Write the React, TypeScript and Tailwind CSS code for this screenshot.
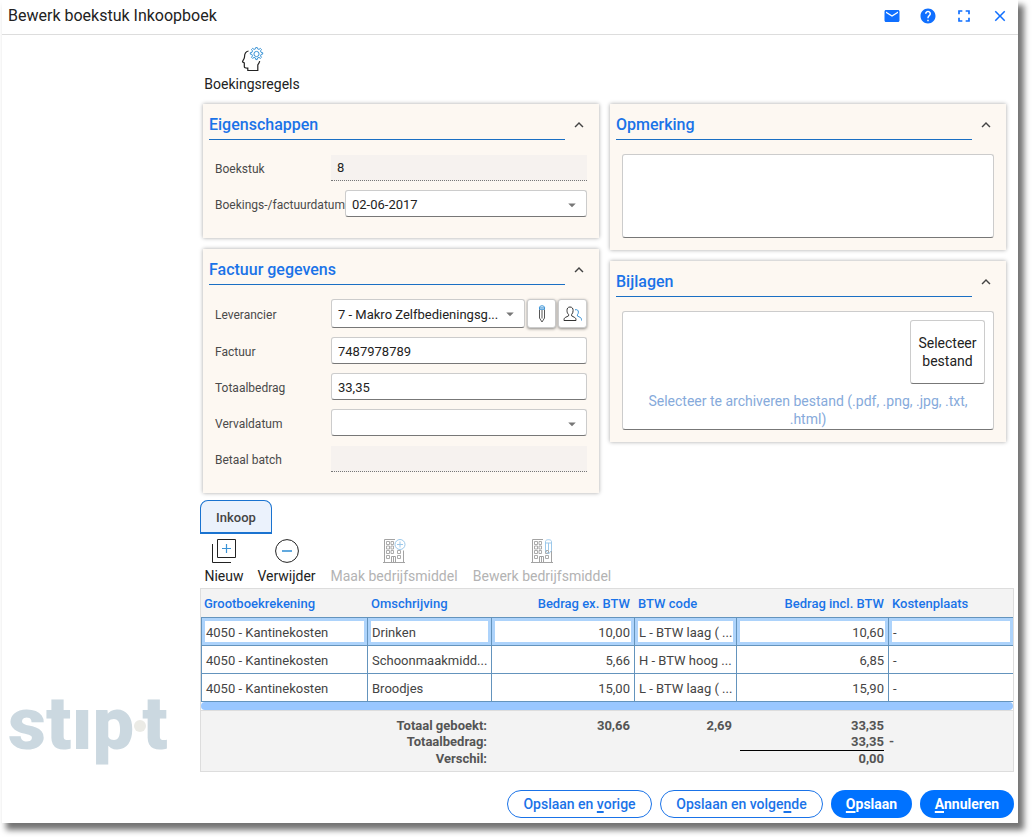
import type { ReactNode } from 'react';
import { MdArrowDropDown, MdClose, MdEmail, MdExpandLess, MdFullscreen, MdHelp } from 'react-icons/md';

const fieldClass =
  'h-[27px] w-full min-w-0 rounded-[3px] border border-[#cccccc] border-b-[#777777] bg-white px-1.5 pt-0.5 text-[13px] text-[#222222] outline-none';
const readOnlyClass =
  'h-[26px] w-full min-w-0 border-b border-dotted border-[#777777] bg-[#f6f2ef] px-1.5 text-[13px] text-[#222222] outline-none';

function HeadGearIcon() {
  return (
    <svg viewBox="0 0 24 24" className="size-6" fill="none" aria-hidden="true">
      <path
        d="M8.5 4C5.800 4.500 4.500 6.800 4.500 10c0 2-2 3.700-2 4.700 0 .8 1.800.6 1.800 1.400v3.300c0 1.400 1 1.800 3.500 1.700v2.400h10v-5.600c1-1.300 1.600-2.500 1.900-3.700"
        stroke="#222"
        strokeWidth="1.2"
      />
      <circle cx="16.500" cy="7" r="2.600" stroke="#3a93d6" />
      <path
        d="M15.500 1.800l.3-1.400h1.400l.3 1.400 1.500.6 1.400-1 1.100 1.100-1 1.400.6 1.500 1.600.3v1.400l-1.600.3-.6 1.500 1 1.400-1.100 1.100-1.400-1-1.500.6-.3 1.600h-1.400l-.3-1.600-1.500-.6-1.400 1-1.100-1.100 1-1.400-.6-1.500-1.600-.3V5.700l1.600-.3.6-1.500-1-1.400 1.100-1.100 1.400 1z"
        stroke="#3a93d6"
      />
    </svg>
  );
}

function NewIcon() {
  return (
    <svg viewBox="0 0 24 24" className="size-6" fill="none" aria-hidden="true">
      <path d="M5.500.5h18v18h-18zM.5 5v18.500H19" stroke="#222" />
      <path d="M14.500 5v9M10 9.500h9" stroke="#3a93d6" strokeWidth="1.2" />
    </svg>
  );
}

function RemoveIcon() {
  return (
    <svg viewBox="0 0 24 24" className="size-6" fill="none" aria-hidden="true">
      <circle cx="12" cy="12" r="11.400" stroke="#222" />
      <path d="M7 12h10" stroke="#3a93d6" strokeWidth="1.600" />
    </svg>
  );
}

function BuildingIcon({ children }: { children: ReactNode }) {
  return (
    <svg viewBox="0 0 24 24" className="size-6" fill="none" stroke="#a3a3a3" aria-hidden="true">
      <path d="M1 23.500h22M2.500 23.500V.5h10.500M21.500 11.500v12M9.500 23.500v-6h4v6M11.500 17.500v6" />
      <path
        d="M4.500 2.500h3v3h-3zM9 2.500h2.500v3H9zM4.500 7h3v3h-3zM9 7h2.500v3H9zM4.500 11.500h3v3h-3zM9 11.500h2.500v3H9zM4.500 16.500h3v3h-3zM15.500 11.500h3v3h-3zM15.500 16.500h3v3h-3z"
        strokeWidth=".9"
      />
      {children}
    </svg>
  );
}

function AddAssetIcon() {
  return (
    <BuildingIcon>
      <circle cx="18" cy="5.500" r="5" stroke="#9cc8ea" />
      <path d="M18 2.500v6M15 5.500h6" stroke="#9cc8ea" />
    </BuildingIcon>
  );
}

function EditAssetIcon() {
  return (
    <BuildingIcon>
      <path d="M15.500 2.500c0-2.400 6-2.400 6 0v9l-3 3.500-3-3.500zM15.500 4h6M18.500 4v7" stroke="#9cc8ea" />
    </BuildingIcon>
  );
}

function PencilIcon() {
  return (
    <svg viewBox="0 0 18 18" className="size-[18px]" fill="none" aria-hidden="true">
      <path d="M6.500 4.500v8.500L9 17l2.500-4V4.500M9 5v8.500" stroke="#444" strokeWidth=".9" />
      <path d="M6.500 4.300V2.200c0-1.900 5-1.900 5 0v2.100zM6.500 2.900h5" stroke="#3a93d6" />
    </svg>
  );
}

function ContactsIcon() {
  return (
    <svg viewBox="0 0 20 18" className="h-[18px] w-5" fill="none" aria-hidden="true">
      <path
        d="M7 2C4.800 2 4 3.500 4 5.500c0 1.800.5 3 1.600 4v1.300L2.300 12.500C1.300 13 1 13.800 1 15.500h12c0-1.700-.3-2.500-1.300-3L8.600 10.800V9.500c1-1 1.500-2.200 1.500-4C10.100 3.500 9.200 2 7 2z"
        stroke="#333"
      />
      <path d="M12 4.800c2.300-.6 3.400.6 3.400 2.300 0 1.200-.4 2-1 2.700v1.200l2.600 1.300c1.200.6 1.500 1.200 1.500 3.200" stroke="#3a93d6" />
    </svg>
  );
}

function Panel({ title, children }: { title: string; children: ReactNode }) {
  return (
    <section className="bg-[#fdf8f2] shadow-[0_0_4px_rgba(0,0,0,0.35)]">
      <header className="flex h-9 px-1.5">
        <h2 className="flex-1 border-b border-[#1a6fc4] pt-2 text-[16px] leading-[26px] font-medium text-[#1a73e8]">{title}</h2>
        <button type="button" aria-label={`${title} inklappen`} className="flex w-7 items-center justify-center pt-1.5 text-[#444444]">
          <MdExpandLess size={18} />
        </button>
      </header>
      {children}
    </section>
  );
}

function Row({ label, id, children }: { label: string; id: string; children: ReactNode }) {
  return (
    <div className="flex min-h-[27px] items-center">
      <label htmlFor={id} className="min-w-[116px] shrink-0 pt-0.5 text-[12px] text-[#4a4a4a]">
        {label}
      </label>
      <div className="flex min-w-0 flex-1 gap-0.5">{children}</div>
    </div>
  );
}

function Select({ id, value, tall }: { id: string; value: string; tall?: boolean }) {
  return (
    <div className="relative min-w-0 flex-1">
      <select id={id} defaultValue={value} className={`${fieldClass} appearance-none ${tall ? 'min-h-[29px]' : ''}`}>
        <option value={value}>{value}</option>
      </select>
      <MdArrowDropDown size={18} className="pointer-events-none absolute top-1.5 right-1.5 text-[#777777]" />
    </div>
  );
}

function ToolButton({ icon, label, width, disabled }: { icon: ReactNode; label: string; width: string; disabled?: boolean }) {
  return (
    <button
      type="button"
      disabled={disabled}
      className={`flex flex-col items-center gap-1 text-[14px] leading-[18px] whitespace-nowrap ${width} ${disabled ? 'text-[#b3b3b3]' : 'text-[#222222]'}`}
    >
      {icon}
      {label}
    </button>
  );
}

const rows = [
  ['4050 - Kantinekosten', 'Drinken', '10,00', 'L - BTW laag ( ...', '10,60', '-'],
  ['4050 - Kantinekosten', 'Schoonmaakmidd...', '5,66', 'H - BTW hoog ...', '6,85', '-'],
  ['4050 - Kantinekosten', 'Broodjes', '15,00', 'L - BTW laag ( ...', '15,90', '-'],
];
const headings = ['Grootboekrekening', 'Omschrijving', 'Bedrag ex. BTW', 'BTW code', 'Bedrag incl. BTW', 'Kostenplaats'];
const isAmount = (column: number) => column === 2 || column === 4;

function BookingTable() {
  return (
    <div className="mt-[3px] border border-[#dddddd] bg-[#f3f3f3]">
      <table className="w-full table-fixed border-separate border-spacing-0 text-[13px]">
        <colgroup>
          <col className="w-[167px]" />
          <col className="w-[124px]" />
          <col className="w-[143px]" />
          <col className="w-[102px]" />
          <col className="w-[152px]" />
          <col />
        </colgroup>
        <thead>
          <tr>
            {headings.map((heading, i) => (
              <th
                key={heading}
                scope="col"
                className={`h-[29px] border-b border-[#6494bd] pt-0.5 pr-[5px] pl-[3px] font-medium whitespace-nowrap text-[#1a73e8] ${isAmount(i) ? 'text-right' : 'text-left'}`}
              >
                {heading}
              </th>
            ))}
          </tr>
        </thead>
        <tbody>
          {rows.map((row, r) => (
            <tr key={row[1]} className="bg-white text-[#444444]">
              {row.map((cell, i) => (
                <td
                  key={i}
                  className={`h-7 overflow-hidden border-b border-[#6494bd] px-1 pt-0.5 whitespace-nowrap ${i < 5 ? 'border-r' : ''} ${i === 0 ? 'border-l' : ''} ${isAmount(i) ? 'text-right' : 'text-left'} ${r === 0 ? 'shadow-[inset_0_0_0_3px_#add3fb]' : ''}`}
                >
                  {cell}
                </td>
              ))}
            </tr>
          ))}
        </tbody>
        <tfoot className="text-right leading-4 font-bold text-[#555555]">
          <tr>
            <td colSpan={6} className="border-b border-[#dddddd] bg-white">
              <div className="h-2 rounded-full bg-[#99c7ff]" />
            </td>
          </tr>
          <tr>
            <th colSpan={2} scope="row" className="pt-[7px] pr-[5px] text-right">
              Totaal geboekt:
            </th>
            <td className="pt-[7px] pr-[5px]">30,66</td>
            <td className="pt-[7px] pr-[5px]">2,69</td>
            <td className="pt-[7px] pr-[5px]">33,35</td>
            <td />
          </tr>
          <tr>
            <th colSpan={2} scope="row" className="pr-[5px] text-right align-top">
              Totaalbedrag:
            </th>
            <td />
            <td />
            <td className="pr-[5px] pl-[3px]">
              <div className="border-b border-black">33,35</div>
            </td>
            <td className="text-left align-top">-</td>
          </tr>
          <tr>
            <th colSpan={2} scope="row" className="pr-[5px] pb-1 text-right">
              Verschil:
            </th>
            <td />
            <td />
            <td className="pr-[5px] pb-1">0,00</td>
            <td />
          </tr>
        </tfoot>
      </table>
    </div>
  );
}

function Key({ children }: { children: string }) {
  return <span className="underline decoration-2 underline-offset-2">{children}</span>;
}

function Logo() {
  return (
    <div aria-label="stipt" className="mt-auto flex items-center pb-[59px] pl-1.5 text-[74px] leading-[80px] font-black text-[#cbd8e0]">
      <span>stıp</span>
      <span className="-mr-1 mt-1 size-3 rounded-full bg-[#ebebe6]" />
      <span>t</span>
    </div>
  );
}

const titleButton = 'flex h-8 w-9 items-center justify-center';
const iconButton =
  'flex h-[29px] w-[29px] items-center justify-center rounded-[3px] border border-[#cccccc] bg-white shadow-[0_1px_3px_rgba(0,0,0,0.45)]';

export default function App() {
  return (
    <div className="bg-white pr-3.5 pb-3.5 pl-0.5 [font-family:Roboto,'Liberation_Sans',sans-serif]">
      <div className="bg-white shadow-[5px_6px_6px_1px_rgba(0,0,0,0.55)]">
        <header className="flex h-[35px] justify-between border-b border-[#dddddd]">
          <h1 className="pl-1.5 text-[16px] leading-8 text-[#222222]">Bewerk boekstuk Inkoopboek</h1>
          <div className="flex text-[#0f6fff]">
            <button type="button" aria-label="E-mail" className={titleButton}>
              <MdEmail size={18} />
            </button>
            <button type="button" aria-label="Help" className={titleButton}>
              <MdHelp size={18} />
            </button>
            <button type="button" aria-label="Volledig scherm" className={titleButton}>
              <MdFullscreen size={20} />
            </button>
            <button type="button" aria-label="Sluiten" className={titleButton}>
              <MdClose size={18} />
            </button>
          </div>
        </header>

        <div className="flex">
          <aside className="flex w-[198px] shrink-0 flex-col">
            <Logo />
          </aside>

          <main className="min-w-0 flex-1 pr-1">
            <div className="flex pt-3">
              <ToolButton icon={<HeadGearIcon />} label="Boekingsregels" width="w-[104px]" />
            </div>

            <div className="mt-[11px] grid grid-cols-2 gap-[11px] pr-2 pl-[3px]">
              <div className="flex flex-col gap-[11px]">
                <Panel title="Eigenschappen">
                  <div className="flex flex-col gap-[9px] px-3 pt-3.5 pb-[21px]">
                    <Row label="Boekstuk" id="boekstuk">
                      <input id="boekstuk" readOnly defaultValue="8" className={readOnlyClass} />
                    </Row>
                    <Row label="Boekings-/factuurdatum" id="datum">
                      <Select id="datum" value="02-06-2017" />
                    </Row>
                  </div>
                </Panel>
                <Panel title="Factuur gegevens">
                  <div className="flex flex-col gap-[9px] px-3 pt-3.5 pb-[21px]">
                    <Row label="Leverancier" id="leverancier">
                      <Select id="leverancier" value="7 - Makro Zelfbedieningsg..." tall />
                      <button type="button" aria-label="Leverancier bewerken" className={iconButton}>
                        <PencilIcon />
                      </button>
                      <button type="button" aria-label="Leveranciers zoeken" className={iconButton}>
                        <ContactsIcon />
                      </button>
                    </Row>
                    <Row label="Factuur" id="factuur">
                      <input id="factuur" defaultValue="7487978789" className={fieldClass} />
                    </Row>
                    <Row label="Totaalbedrag" id="totaal">
                      <input id="totaal" defaultValue="33,35" className={fieldClass} />
                    </Row>
                    <Row label="Vervaldatum" id="verval">
                      <Select id="verval" value="" />
                    </Row>
                    <Row label="Betaal batch" id="batch">
                      <input id="batch" readOnly className={readOnlyClass} />
                    </Row>
                  </div>
                </Panel>
              </div>

              <div className="flex flex-col gap-[11px]">
                <Panel title="Opmerking">
                  <div className="px-3 pt-3.5 pb-3">
                    <textarea
                      aria-label="Opmerking"
                      className="block h-[84px] w-full resize-none rounded-[3px] border border-[#cccccc] border-b-[#777777] bg-white p-1.5 text-[13px] outline-none"
                    />
                  </div>
                </Panel>
                <Panel title="Bijlagen">
                  <div className="px-3 pt-3.5 pb-3">
                    <div className="flex h-[119px] flex-col rounded-[3px] border border-[#cccccc] border-b-[#777777] bg-white pt-2">
                      <button
                        type="button"
                        className="mr-2 h-16 w-[75px] self-end rounded-[3px] border border-[#cccccc] border-b-[#777777] text-[14px] leading-[18px] text-[#222222]"
                      >
                        Selecteer bestand
                      </button>
                      <p className="mt-2 px-5 text-center text-[14px] leading-[18px] text-[#86aadb]">
                        Selecteer te archiveren bestand (.pdf, .png, .jpg, .txt, .html)
                      </p>
                    </div>
                  </div>
                </Panel>
              </div>
            </div>

            <div role="tablist" className="mt-[7px] flex">
              <button
                type="button"
                role="tab"
                aria-selected="true"
                className="h-[34px] w-[72px] rounded-t-lg border border-b-2 border-[#1a73d0] bg-[#ebf2fc] pt-0.5 text-[13px] font-medium text-[#444444]"
              >
                Inkoop
              </button>
            </div>

            <div className="mt-[5px] flex gap-3.5 pl-[5px]">
              <ToolButton icon={<NewIcon />} label="Nieuw" width="w-[38px]" />
              <ToolButton icon={<RemoveIcon />} label="Verwijder" width="w-[59px]" />
              <ToolButton icon={<AddAssetIcon />} label="Maak bedrijfsmiddel" width="w-[128px]" disabled />
              <ToolButton icon={<EditAssetIcon />} label="Bewerk bedrijfsmiddel" width="w-[140px]" disabled />
            </div>

            <BookingTable />

            <footer className="flex justify-end gap-2 pt-[18px] pb-[5px] text-[14px] font-medium whitespace-nowrap">
              <button type="button" className="h-7 w-[145px] rounded-full border border-[#1a73e8] text-[#1a73e8]">
                Opslaan en <Key>v</Key>orige
              </button>
              <button type="button" className="h-7 w-[163px] rounded-full border border-[#1a73e8] text-[#1a73e8]">
                Opslaan en volge<Key>n</Key>de
              </button>
              <button type="button" className="h-7 w-[81px] rounded-full bg-[#0072ff] font-bold text-white">
                <Key>O</Key>pslaan
              </button>
              <button type="button" className="h-7 w-[94px] rounded-full bg-[#0072ff] font-bold text-white">
                <Key>A</Key>nnuleren
              </button>
            </footer>
          </main>
        </div>
      </div>
    </div>
  );
}
